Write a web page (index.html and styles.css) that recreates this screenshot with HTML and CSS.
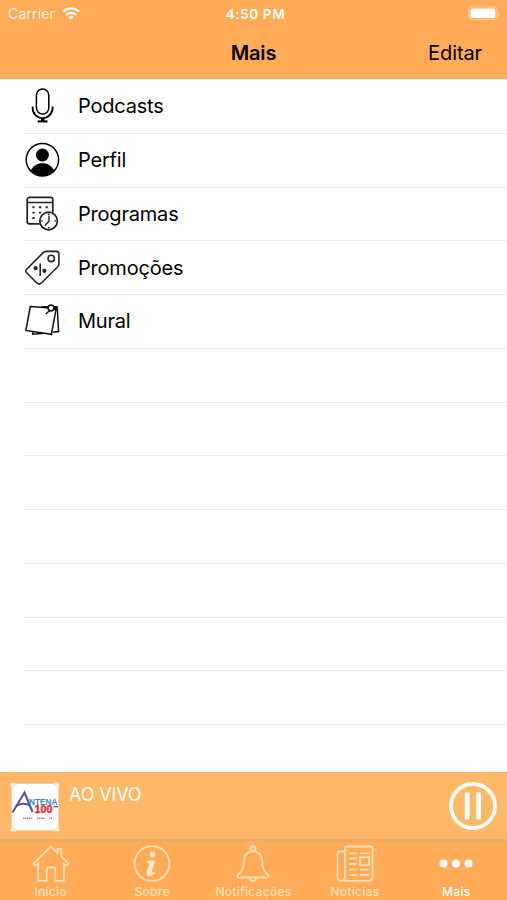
FILE: index.html
```html
<!DOCTYPE html>
<html lang="pt-BR">
<head>
  <meta charset="UTF-8" />
  <meta name="viewport" content="width=device-width, initial-scale=1.0">
  <title>Mais</title>
  <link rel="stylesheet" href="styles.css">
</head>
<body>

  <header class="header">
    <div class="status">
      <div class="carrier">
        <span>Carrier</span>
        <svg width="18" height="13" viewBox="0 0 18 13" fill="none" stroke="#fff" stroke-width="2.3">
          <path d="M1 4.6a11.5 11.5 0 0 1 16 0M4 7.9a7.2 7.2 0 0 1 10 0" />
          <path d="M9 12.7 6.4 10.1a3.7 3.7 0 0 1 5.2 0z" fill="#fff" stroke="none" />
        </svg>
      </div>
      <span class="clock">4:50 PM</span>
      <svg class="battery" width="32" height="15" viewBox="0 0 32 15">
        <rect x=".7" y=".9" width="28.3" height="12.8" rx="3.6" fill="none" stroke="#ffd0a0" stroke-width="1" />
        <rect x="2.4" y="2.5" width="25" height="9.6" rx="2" fill="#fff" />
        <path d="M30.2 5.4c1.6.8 1.6 3.2 0 4z" fill="#ffd0a0" />
      </svg>
    </div>
    <div class="navbar">
      <h1>Mais</h1>
      <span class="edit">Editar</span>
    </div>
  </header>

  <main class="list">
    <div class="row">
      <svg class="icon" viewBox="0 0 36 36" fill="none" stroke="#000" stroke-width="1.5">
        <rect x="11.4" y="1" width="12.4" height="25" rx="6.2" />
        <path d="M7.6 18.5v1.6a10 10 0 0 0 20 0v-1.6" stroke-width="1.8" />
        <path d="M17.6 30v3" stroke-width="3.4" />
        <path d="M12.7 33.4h9.8" stroke-width="2" />
      </svg>
      <span class="label">Podcasts</span>
    </div>
    <div class="row">
      <svg class="icon" viewBox="0 0 36 36">
        <circle cx="17.4" cy="17.7" r="16.2" fill="#fff" stroke="#000" stroke-width="1.5" />
        <circle cx="17.4" cy="13" r="6.5" />
        <path d="M5.5 29C7.8 23.8 12.5 21.2 17.4 21.2S27 23.8 29.3 29a16.5 16.5 0 0 1-23.8 0z" />
      </svg>
      <span class="label">Perfil</span>
    </div>
    <div class="row">
      <svg class="icon" viewBox="0 0 36 36" fill="none" stroke="#222" stroke-width="1.7">
        <path d="M14.5 27.8H4.2a2 2 0 0 1-2-2V3.4a2 2 0 0 1 2-2h21.6a2 2 0 0 1 2 2v13M2.2 6.5h25.6" />
        <path d="M7.4 11.3h2.2m4.4 0h2.2m4.4 0h2.2M7.4 16.6h2.2m4.4 0h2.2m4.4 0h2.2M7.4 22h2.2" stroke-width="1.9" />
        <circle cx="23.6" cy="25" r="8.8" fill="#fff" />
        <path d="M24 19.5v5.8l-4 4.2M23.6 17.5v1.5m0 12v1.5M16.2 25h1.4m12 0H31" stroke-width="1.4" />
      </svg>
      <span class="label">Programas</span>
    </div>
    <div class="row">
      <svg class="icon" viewBox="0 0 36 36" fill="none" stroke="#222" stroke-width="1.6">
        <path d="M1.6 19.2 18.2 2.7q1.4-1.3 3.2-1.3h10.2q2.3 0 2.3 2.3v10.1q0 1.7-1.2 3L16.1 33.2q-2 1.8-4 0L1.6 22.8q-1.8-1.8 0-3.6z" />
        <circle cx="26.2" cy="8.4" r="3.2" />
        <path d="M15.2 13.4V26" />
        <circle cx="10.6" cy="18.2" r="1.3" fill="#222" />
        <circle cx="19.4" cy="20.8" r="1.3" fill="#222" />
      </svg>
      <span class="label">Promoções</span>
    </div>
    <div class="row">
      <svg class="icon" viewBox="0 0 36 36" fill="none" stroke="#111" stroke-width="1.5">
        <path d="M32.2 3.8 33.6 28.5l-5.8.8M7.8 28v3.2l12-1" />
        <path d="M5.3 3.6 31.2 5.5 26.4 31.3.9 27.4z" fill="#fff" />
        <path d="M16.5 3.8h15.8M25 7.3 20.8 11" />
        <circle cx="26" cy="5" r="2.9" fill="#fff" />
        <path d="M28.3 7.2h4.2l-.3-3.6h-3z" fill="#111" stroke="none" />
      </svg>
      <span class="label">Mural</span>
    </div>
    <div class="row"></div>
    <div class="row"></div>
    <div class="row"></div>
    <div class="row"></div>
    <div class="row"></div>
    <div class="row"></div>
    <div class="row"></div>
  </main>

  <section class="player">
    <svg class="cover" width="50" height="50" viewBox="0 0 50 50">
      <path d="M.8.8h6l-6 6zM49.2.8v6l-6-6zM49.2 49.2h-6l6-6zM.8 49.2v-6l6 6z" fill="#fff1df" />
      <rect x="1.5" y="1.5" width="47" height="47" rx="7" fill="#fff" stroke="#ffc98f" stroke-width=".6" />
      <path d="M2.5 30.5 14.5 10.5l8 19.5M6.5 23.8q7-4.2 14 0" fill="none" stroke="#56539b" stroke-width="2.1" />
      <text x="19" y="23" font-size="9" fill="#3b86c3" textLength="28.5" lengthAdjust="spacingAndGlyphs">NTENA</text>
      <text x="24.5" y="31" font-size="10.5" fill="#d52f38" stroke="#d52f38" stroke-width=".4" textLength="18" lengthAdjust="spacingAndGlyphs">100</text>
      <path d="M43.5 24.6h4.5" stroke="#56539b" stroke-width="1.4" />
      <path d="M13 36.2h10m4 0h8m4 0h3" stroke="#999" stroke-width="1.4" stroke-dasharray="1.4 .5" />
    </svg>
    <span class="live">AO VIVO</span>
    <svg class="pause" width="48" height="48" viewBox="0 0 48 48" fill="none" stroke="#fff">
      <circle cx="24" cy="24" r="22" stroke-width="3.8" />
      <path d="M18.2 10.5v27M29.6 10.5v27" stroke-width="4.8" />
    </svg>
  </section>

  <nav class="tabs">
    <div class="tab">
      <svg viewBox="0 0 38 38">
        <path d="M1.5 18.7 19 1.5l6.7 6.4V3.8h3.7v7.7l7.1 7.2-2 2.2-2.7-2v16.9h-8.5V24.5q0-2-2-2h-4.6q-2 0-2 2v11.3H6.2V18.9l-2.7 2z" />
      </svg>
      <span>Início</span>
    </div>
    <div class="tab">
      <svg viewBox="0 0 38 38">
        <circle cx="19" cy="18.5" r="17.4" />
        <circle cx="19.6" cy="9.4" r="2.9" class="solid" />
        <path d="M14.4 15.5h7.8l-3.5 11.8q-.3 1.3 2.6-.9l1.1 1.2q-3 3.8-6.2 3.7-3.3-.2-2.5-3.3l2.7-9.5-2.4-.7z" class="solid" />
      </svg>
      <span>Sobre</span>
    </div>
    <div class="tab">
      <svg viewBox="0 0 38 38">
        <circle cx="19" cy="3.8" r="2.5" />
        <path d="M19 6.3c-6.3 0-9.2 4.6-9.2 10.4 0 7.3-2 10.5-6.2 13.4q-1 2.4 1.4 2.4h28q2.4 0 1.4-2.4c-4.2-2.9-6.2-6.1-6.2-13.4 0-5.8-2.9-10.4-9.2-10.4zM15.6 33.5a3.5 3.5 0 0 0 6.8 0" />
      </svg>
      <span>Notificações</span>
    </div>
    <div class="tab">
      <svg viewBox="0 0 38 38">
        <path d="M9 32V3.5q0-2 2-2h23.5q2 0 2 2v29q0 3.3-3.3 3.3H4.8q-3.3 0-3.3-3.3V8.5q0-2 2-2H9M9 32q0 3.8-3.5 3.8" />
        <path d="M13 8.3h7.7m3.3 0h9M13 13.5h7.7M13 19h7.7M13 24.7h7.7m3.3 0h9M13 30h7.7m3.3 0h9" />
        <rect x="24" y="12.3" width="9" height="8" />
      </svg>
      <span>Notícias</span>
    </div>
    <div class="tab active">
      <svg viewBox="0 0 38 38">
        <circle cx="6.4" cy="18.5" r="4" class="solid" />
        <circle cx="19" cy="18.5" r="4" class="solid" />
        <circle cx="31.6" cy="18.5" r="4" class="solid" />
      </svg>
      <span>Mais</span>
    </div>
  </nav>

</body>
</html>
```
FILE: styles.css
```css
* {
  box-sizing: border-box;
}

body {
  margin: 0;
  height: 900px;
  display: flex;
  flex-direction: column;
  overflow: hidden;
  background: #fff;
  color: #000;
  font-family: Inter, "Liberation Sans", sans-serif;
}

svg {
  display: block;
  flex-shrink: 0;
}

.header {
  height: 79px;
  background: #ffab58;
}

.status {
  display: grid;
  grid-template-columns: 1fr auto 1fr;
  align-items: center;
  height: 27px;
  padding: 0 7px 0 8px;
  color: #fff;
  font-size: 14px;
}

.carrier {
  display: flex;
  align-items: center;
  gap: 7px;
  color: #fff0e0;
  letter-spacing: 0.15px;
}

.clock {
  font-size: 13.5px;
  font-weight: 600;
  letter-spacing: 0.6px;
  padding-left: 3px;
}

.battery {
  justify-self: end;
}

.navbar {
  display: grid;
  grid-template-columns: 1fr auto 1fr;
  align-items: center;
  height: 51px;
  padding: 0 25px;
}

.navbar h1 {
  grid-column: 2;
  margin: 0;
  font-size: 20px;
  font-weight: 600;
  letter-spacing: -0.2px;
}

.edit {
  justify-self: end;
  font-size: 20px;
  letter-spacing: -0.1px;
}

.list {
  height: 693px;
  padding: 1px 0 0 25px;
}

.row {
  display: flex;
  align-items: center;
  gap: 17px;
  height: 53.75px;
  border-bottom: 1px solid #e9e9e9;
}

.icon {
  width: 36px;
  height: 36px;
}

.label {
  font-size: 20px;
  letter-spacing: -0.2px;
}

.player {
  display: flex;
  align-items: flex-start;
  height: 67px;
  padding: 9px 10px 0;
  background: #ffb868;
  border-top: 1px solid #edb778;
}

.cover {
  font-family: "Liberation Sans", sans-serif;
  font-weight: bold;
}

.live {
  flex: 1;
  padding: 2px 0 0 9px;
  color: #fff;
  font-size: 18px;
  line-height: 22px;
  letter-spacing: -0.15px;
}

.tabs {
  display: grid;
  grid-template-columns: repeat(5, 1fr);
  height: 61px;
  background: #ffab58;
  border-top: 2px solid #e5ac6b;
}

.tab {
  display: flex;
  flex-direction: column;
  align-items: center;
  padding-top: 4px;
  color: #ffe0b9;
  font-size: 12px;
  font-weight: 500;
  line-height: 14px;
  letter-spacing: 0.3px;
}

.tab svg {
  width: 38px;
  height: 38px;
  margin-bottom: 2px;
  fill: none;
  stroke: #ffdfb7;
  stroke-width: 1.8;
}

.tab .solid {
  fill: #ffe8ce;
  stroke: none;
}

.active {
  color: #fff;
}

.active .solid {
  fill: #fff;
}
```
